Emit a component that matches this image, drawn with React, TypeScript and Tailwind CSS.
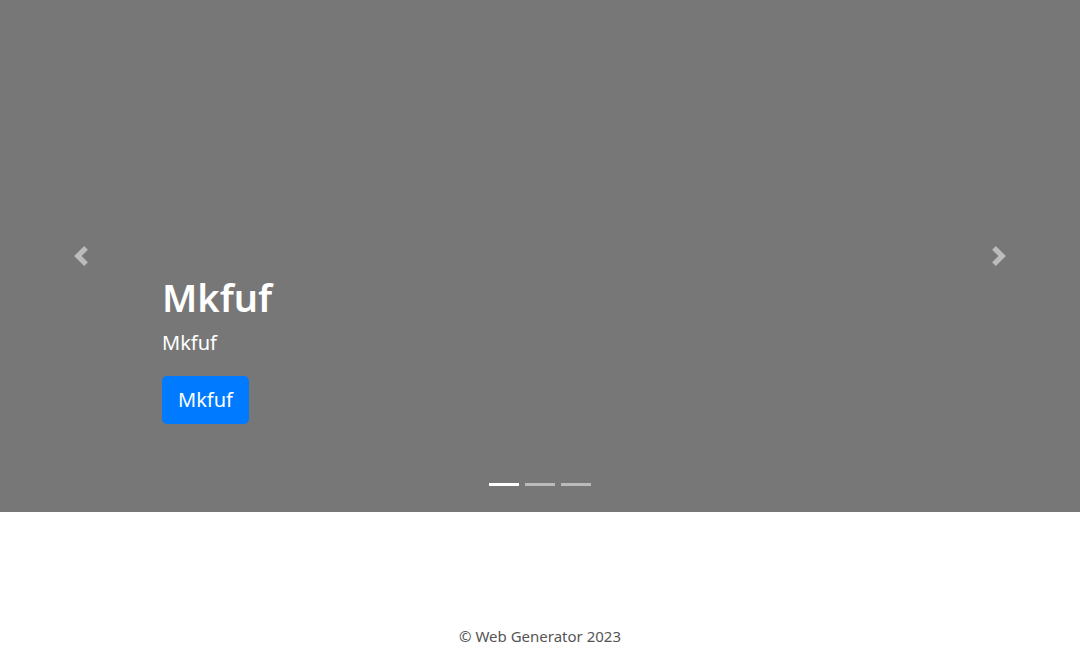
export default function App() {
  const slides = [true, false, false];
  return (
    <div className="min-h-[648px] bg-white" style={{ fontFamily: '"Noto Sans", "Open Sans", sans-serif' }}>
      <div className="relative h-[512px] bg-[#777777] overflow-hidden">
        {/* caption */}
        <div className="pl-[162px] pt-[273px] text-white">
          <h1 className="text-[38px] leading-[48px] font-semibold">Mkfuf</h1>
          <p className="mt-[7px] text-[20px] leading-[30px]">Mkfuf</p>
          <button className="mt-[18px] h-[48px] px-4 rounded-[5px] bg-[#007bff] text-[20px] leading-[30px] text-white">
            Mkfuf
          </button>
        </div>

        {/* prev / next */}
        <button className="absolute left-0 top-0 h-full w-[162px] flex items-center justify-center opacity-50">
          <svg width="20" height="20" viewBox="0 0 8 8" fill="#fff">
            <path d="M5.25 0l-4 4 4 4 1.5-1.5L4.25 4l2.5-2.5L5.25 0z" />
          </svg>
        </button>
        <button className="absolute right-0 top-0 h-full w-[162px] flex items-center justify-center opacity-50">
          <svg width="20" height="20" viewBox="0 0 8 8" fill="#fff">
            <path d="M2.75 0l-1.5 1.5L3.75 4l-2.5 2.5L2.75 8l4-4-4-4z" />
          </svg>
        </button>

        {/* indicators */}
        <div className="absolute bottom-[26px] left-0 right-0 flex justify-center gap-[6px]">
          {slides.map((active, i) => (
            <span key={i} className={`block w-[30px] h-[3px] bg-white ${active ? 'opacity-100' : 'opacity-50'}`} />
          ))}
        </div>
      </div>

      <footer className="pt-[112px] text-center text-[15px] leading-[24px] text-[#555555]">
        © Web Generator 2023
      </footer>
    </div>
  );
}
